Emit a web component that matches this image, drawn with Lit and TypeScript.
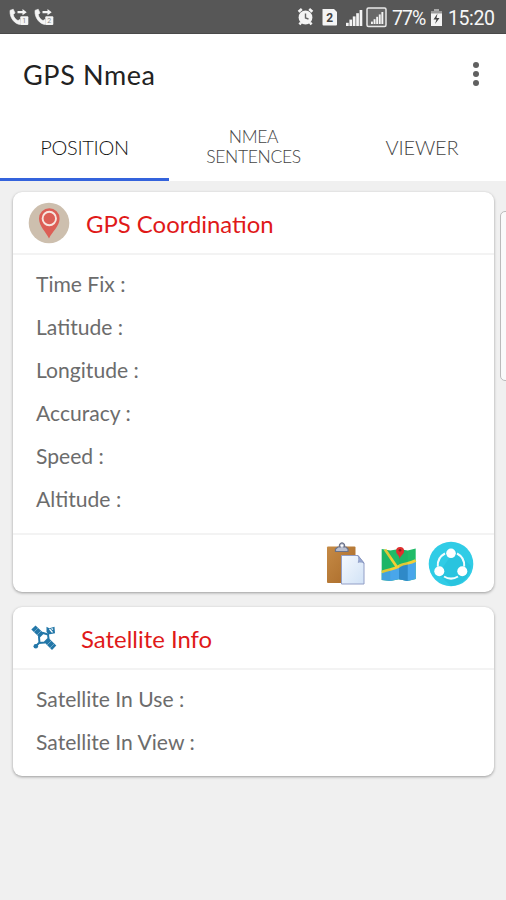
import { LitElement, html, css, svg } from "lit";
import { customElement, property } from "lit/decorators.js";

const callIcon = (n: string) => html`<svg width="20" height="19" viewBox="0 0 20 19" fill="#f4f4f4">
  <path d="M1 2.400 L4.200 1.200 L6 4.900 L4.300 6.600 C4.800 9.300 6.400 11.300 9 12.600 L11 11.400 L11.400 16.500 C6.500 16.500 .4 10.500 1 2.400Z" stroke="#f4f4f4" stroke-width=".6"/>
  <path d="M8.500 3h5V1l4.200 3.200-4.200 3V5.300h-5z"/>
  <rect x="11.300" y="8.300" width="8" height="8.700" rx="1"/>
  <text x="15.300" y="15.300" font-size="7" text-anchor="middle" font-family="Roboto" fill="#888">${n}</text>
</svg>`;

const bars = (x: number, y: number, w: number, h: number) =>
  [0, 1, 2, 3, 4].map((i) => {
    const bh = (h * (i + 1)) / 5;
    return svg`<rect x=${x + (i * w) / 5} y=${y + h - bh} width=${w / 5 - 0.7} height=${bh}/>`;
  });

const statusIcons = html`<svg width="94" height="24" viewBox="0 0 94 24" fill="#f4f4f4">
  <circle cx="8.500" cy="12.500" r="6.900"/>
  <path d="M1.600 6.800L4.800 4M15.400 6.800L12.200 4M4 17.500L2.500 19.500M13 17.500l1.500 2" stroke="#f4f4f4" stroke-width="2.600"/>
  <path d="M8.500 8.500v4.500l3 1" stroke="#666" stroke-width="1.400" fill="none"/>
  <path d="M25.500 4H37l3 3v12.500a1 1 0 0 1-1 1H26.500a1 1 0 0 1-1-1z"/>
  <text x="32.700" y="16.700" font-size="12" font-weight="700" text-anchor="middle" font-family="Roboto" fill="#444">2</text>
  ${bars(49, 5, 17, 16)}
  <rect x="70" y="3" width="19" height="18.500" rx="1.500" fill="#686868" stroke="#e8e8e8" stroke-width="1.500"/>
  ${bars(74, 7, 13, 12)}
</svg>`;

const batteryIcon = html`<svg width="13" height="20" viewBox="0 0 13 20">
  <path d="M4 1h5v2H4z" fill="#aaa"/><path d="M1 3h11v3H1z" fill="#999"/>
  <path d="M1 5.500h11V18H1z" fill="#f4f4f4"/>
  <path d="M7.500 5.500L3.500 11.500h3L5 16l4.500-6h-3z" fill="#444"/>
</svg>`;

const pinIcon = html`<svg width="42" height="42" viewBox="0 0 42 42">
  <circle cx="21" cy="21" r="20.300" fill="#cdbfae"/>
  <path d="M21 36.500C18 30 11 24 11 16.500a10.300 10.300 0 0 1 20.600 0C31.600 24 24 30 21 36.500z" fill="#dc5f56"/>
  <circle cx="21.300" cy="16.500" r="6.700" fill="#dc5f56" stroke="#f7e6df" stroke-width="1.900"/>
</svg>`;

const satelliteIcon = html`<svg width="26" height="26" viewBox="0 0 26 26">
  <g fill="#2377a8">
    <path d="M.3 4.500L4.500.5 12.500 8 8.300 12.300z"/>
    <path d="M13 17L17.300 12.800 25.300 20.500 21 25z"/>
    <path d="M15.500 1.800l2.800 1.500L23.500 1.800l.5 6.500-6.500 1.300-2-2.600z"/>
    <circle cx="4.800" cy="21.300" r="2.300"/>
  </g>
  <path d="M8 12l4-4 5 1.500.5 4-4 4-5 .5zM9 17l-4 4" fill="#fff" stroke="#2377a8" stroke-width="2"/>
  <path d="M3 7l4-4M6 10l4-4M16 20l4-4M19 23l4-4" stroke="#9ac6de" stroke-width=".6"/>
  <path d="M18.500 4l3 3.500M20.500 3.500l1.500 1" stroke="#fff" stroke-width="1.200"/>
</svg>`;

const clipboardIcon = html`<svg width="40" height="44" viewBox="0 0 40 44">
  <defs>
    <linearGradient id="board" x2="1" y2="1"><stop stop-color="#c58a45"/><stop offset="1" stop-color="#a96a29"/></linearGradient>
    <linearGradient id="sheet" x2="1" y2="1"><stop stop-color="#f5f9fe"/><stop offset="1" stop-color="#d1e2f6"/></linearGradient>
  </defs>
  <rect x="1" y="4.500" width="28.500" height="36.500" rx="1" fill="url(#board)"/>
  <path d="M9.500 9.500V7L12 5h2a2.500 2.500 0 1 1 4 0h2l2 2v2.500z" fill="#b9bfd0" stroke="#6b7288" stroke-width="1.200"/>
  <circle cx="15.900" cy="3.600" r="1.200" fill="#fff"/>
  <path d="M15.500 13.500H32l6 7.500v21H15.500z" fill="url(#sheet)" stroke="#929ec6" stroke-width="1"/>
  <path d="M32 13.500c1 3 .8 5 .2 7 2-.8 4.200-.3 5.800.7z" fill="#98a9d2" stroke="#7e8db9" stroke-width=".6"/>
</svg>`;

const mapIcon = html`<svg width="36" height="38" viewBox="0 0 36 38">
  <path d="M.7 4l8.600 1.500 8.700-1.500 8.700 1.500 8-2v30.500l-8 2-8.700-1.800L9.300 36 .7 35z" fill="#20bb68"/>
  <path d="M.7 28c8-3 14-4 19-7.500 5-2 10-2 15-4.500v18l-8 2-8.700-1.800L9.300 36 .7 35z" fill="#49a6ea"/>
  <path d="M18 21l8.700-3v18L18 34.200z" fill="#338bd2"/>
  <path d="M.7 27C9 24 15 24 19 20.500c5-2.500 10-1.500 15.700-5M4 4.600c4 6 8 11.400 12 17.500" fill="none" stroke="#f4cf35" stroke-width="2.700"/>
  <path d="M9.300 5.500V36L.7 35V4zM18 4l8.700 1.500V36L18 34.200z" fill="#075" opacity=".08"/>
  <path d="M18.700 14c-.2-4-3.600-4.500-3.600-8a4 4 0 0 1 8 0c0 3.500-3.700 4-4.400 8z" fill="#e02f2f"/>
  <circle cx="19" cy="5.300" r="1.300" fill="#8c1d1d"/>
</svg>`;

const shareIcon = html`<svg width="46" height="46" viewBox="0 0 46 46">
  <circle cx="23" cy="23" r="22.300" fill="#30cce6"/>
  <path d="M27 9l16 16A22 22 0 0 1 23 45L10 33z" fill="#20b9d5" opacity=".4"/>
  <g fill="none" stroke="#f4fcfe" stroke-width="2">
    <path d="M9.800 25.500A13.500 13.500 0 0 1 17 12.500M29 12.500A13.500 13.500 0 0 1 36.200 25.500M16 35.500A13.500 13.500 0 0 0 30 35.500"/>
  </g>
  <g fill="#fff"><circle cx="23" cy="12.300" r="4.800"/><circle cx="11.300" cy="30.200" r="5"/><circle cx="34.300" cy="30.200" r="5"/></g>
</svg>`;

@customElement("info-card")
class InfoCard extends LitElement {
  @property() heading = "";
  @property({ attribute: false }) rows: string[] = [];
  static styles = css`
    :host { display: block; background: #fff; border-radius: 9px; box-shadow: 0 1px 3px rgba(0, 0, 0, 0.36); }
    .head { display: flex; align-items: center; height: 61px; border-bottom: 2px solid #f3f3f3; color: #e01919; font-size: 23.9px; }
    .icon { display: flex; flex: none; width: var(--icon-space, 73px); padding: var(--icon-top, 0) 0 0 var(--icon-pad, 15px); box-sizing: border-box; }
    .title { padding-top: 2px; }
    .rows { padding: 7px 23px 13px; color: #6c6c6c; font-size: 21.1px; }
    .row { height: 43px; line-height: 43px; }
  `;
  render() {
    return html`<div class="head"><span class="icon"><slot name="icon"></slot></span><span class="title">${this.heading}</span></div>
      <div class="rows">${this.rows.map((r) => html`<div class="row">${r}</div>`)}</div>
      <slot name="actions"></slot>`;
  }
}

@customElement("app-root")
class AppRoot extends LitElement {
  static styles = css`
    :host { display: block; position: relative; height: 900px; overflow: hidden; background: #f0f0f0; font-family: Lato, sans-serif; }
    svg { display: block; flex: none; }
    .status { display: flex; align-items: center; height: 34px; padding: 0 11px 0 9px; box-sizing: border-box; background: #575757; border-bottom: 1px solid #494949; color: #f6f6f6; font: 19.500px Roboto, sans-serif; }
    .calls { display: flex; gap: 5px; flex: 1; padding-top: 2px; }
    .percent { width: 35px; margin-left: 1px; font-size: 19.500px; letter-spacing: -0.900px; white-space: nowrap; padding-top: 3px; }
    .battery { margin: 2px 5px 0 3px; }
    .clock { width: 47px; letter-spacing: -0.400px; white-space: nowrap; padding-top: 4px; }
    .bar { display: flex; align-items: center; justify-content: space-between; height: 82px; padding: 0 27px 0 23px; background: #fff; color: #222; font-size: 27px; letter-spacing: 0.600px; }
    .name { padding-bottom: 2px; }
    .dots { display: grid; gap: 3px; margin-bottom: 3px; }
    .dot { width: 6px; height: 6px; border-radius: 50%; background: #606060; }
    .tabs { display: grid; grid-template-columns: 169px 1fr 168px; height: 65px; background: #fff; color: #444; font-size: 20px; font-weight: 300; letter-spacing: -0.200px; }
    .tab { display: flex; align-items: center; justify-content: center; text-align: center; box-sizing: border-box; padding-bottom: 1px; border-bottom: 3px solid transparent; }
    .tab.active { color: #111; border-color: #3463dc; letter-spacing: -0.300px; }
    .tab.two { font-size: 17.500px; line-height: 20px; padding-bottom: 0; letter-spacing: -0.350px; }
    .cards { display: grid; gap: 15px; padding: 11px 12px 0 13px; }
    .satellite { --icon-space: 68px; --icon-pad: 18px; --icon-top: 1px; }
    .actions { display: flex; align-items: center; justify-content: flex-end; height: 57px; border-top: 2px solid #f3f3f3; padding-right: 20px; }
    .map { margin: 0 11px 0 15px; }
    .edge { position: absolute; left: 500px; top: 211px; width: 20px; height: 168px; border: 1px solid #bbb; border-radius: 5px; background: #fafafa; }
  `;
  render() {
    return html`
      <div class="status">
        <div class="calls">${callIcon("1")}${callIcon("2")}</div>
        ${statusIcons}<span class="percent">77%</span><span class="battery">${batteryIcon}</span><span class="clock">15:20</span>
      </div>
      <div class="bar"><span class="name">GPS Nmea</span><div class="dots"><i class="dot"></i><i class="dot"></i><i class="dot"></i></div></div>
      <div class="tabs">
        <div class="tab active">POSITION</div>
        <div class="tab two">NMEA<br />SENTENCES</div>
        <div class="tab">VIEWER</div>
      </div>
      <div class="cards">
        <info-card heading="GPS Coordination" .rows=${["Time Fix :", "Latitude :", "Longitude :", "Accuracy :", "Speed :", "Altitude :"]}>
          <span slot="icon">${pinIcon}</span>
          <div slot="actions" class="actions">${clipboardIcon}<span class="map">${mapIcon}</span>${shareIcon}</div>
        </info-card>
        <info-card class="satellite" heading="Satellite Info" .rows=${["Satellite In Use :", "Satellite In View :"]}>
          <span slot="icon">${satelliteIcon}</span>
        </info-card>
      </div>
      <div class="edge"></div>`;
  }
}
